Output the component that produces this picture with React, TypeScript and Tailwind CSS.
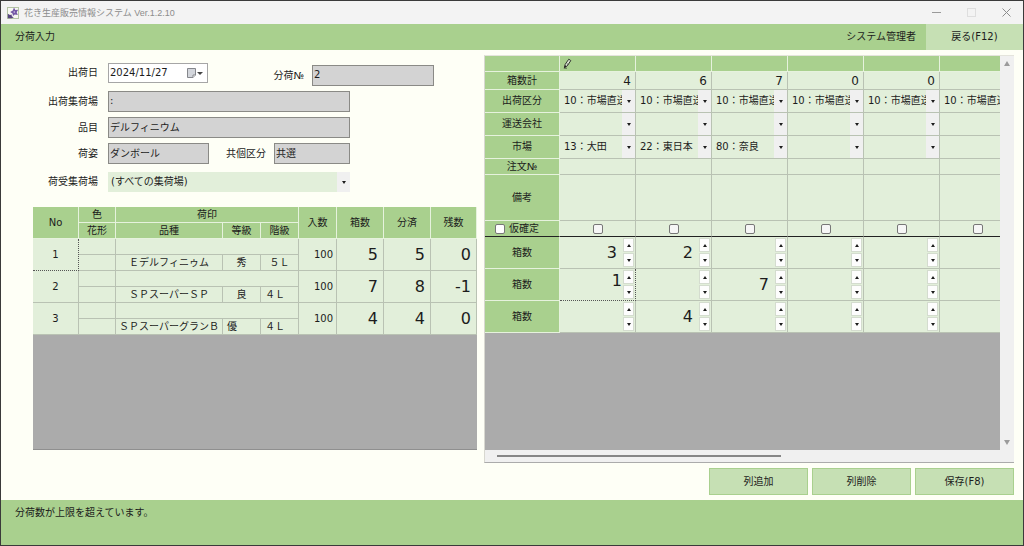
import React, { useState } from 'react'

interface Item {
  no: number
  name: string
  grade: string
  gradeAlign: string
  size: string
  sizeAlign: string
  per: number
  boxes: number
  done: number
  rest: number
}

interface Column {
  total: string
  market: string
  counts: string[]
}

const ITEMS: Item[] = [
  { no: 1, name: 'Ｅデルフィニゥム', grade: '秀', gradeAlign: 'text-center', size: '５Ｌ', sizeAlign: 'text-center', per: 100, boxes: 5, done: 5, rest: 0 },
  { no: 2, name: 'ＳＰスーパーＳＰ', grade: '良', gradeAlign: 'text-center', size: '４Ｌ', sizeAlign: 'text-left', per: 100, boxes: 7, done: 8, rest: -1 },
  { no: 3, name: 'ＳＰスーパーグランＢ', grade: '優', gradeAlign: 'text-left', size: '４Ｌ', sizeAlign: 'text-left', per: 100, boxes: 4, done: 4, rest: 0 },
]

const COLUMNS: Column[] = [
  { total: '4', market: '13：大田', counts: ['3', '1', ''] },
  { total: '6', market: '22：東日本', counts: ['2', '', '4'] },
  { total: '7', market: '80：奈良', counts: ['', '7', ''] },
  { total: '0', market: '', counts: ['', '', ''] },
  { total: '0', market: '', counts: ['', '', ''] },
  { total: '', market: '', counts: ['', '', ''] },
]

const HEAD = 'bg-[#a9d08e] border-r border-b border-[#e6f2dd] p-0 font-normal'
const CELL = 'bg-[#e2efda] border-r border-b border-[#b9c2b3] p-0'
const READONLY = 'h-[21px] border border-[#8a8a86] bg-[#d3d3d3] px-px pb-[3px] outline-none'
const ACTION = 'h-[27px] w-[99px] border border-[#a9d08e] bg-[#c6e0b4]'

function Triangle({ up = false, className = 'h-[3px] w-[4px]' }: { up?: boolean; className?: string }) {
  return (
    <svg viewBox="0 0 6 4" preserveAspectRatio="none" className={`fill-current ${className}`} aria-hidden="true">
      <path d={up ? 'M0 4L3 0L6 4Z' : 'M0 0L3 4L6 0Z'} />
    </svg>
  )
}

function AppIcon() {
  return (
    <svg viewBox="0 0 12 12" className="h-3 w-3" aria-hidden="true">
      <rect x="0.5" y="0.5" width="11" height="11" fill="#f7f8f2" stroke="#b4c4a4" />
      <path d="M7 0.6L8.3 2.9L11.2 2.8L9.7 5.2L10.8 7.9L7.8 7.5L6 9L5.5 6.5L3.2 4.9L5.8 3.6Z" fill="#7459a6" />
      <circle cx="7.3" cy="5" r="0.8" fill="#d9cdea" />
      <path d="M0.8 6.8L3 8L4.6 7.6L4.8 9.2L6.8 10.6L4.4 11.2H0.8Z" fill="#57457f" />
    </svg>
  )
}

function Spinner({ label, initial, active }: { label: string; initial: string; active: boolean }) {
  const [value, setValue] = useState(initial)
  const step = (n: number) => setValue(String(Math.max(0, Number(value) + n)))

  return (
    <div className="flex h-[31px] items-center">
      <input
        aria-label={label}
        value={value}
        onChange={e => setValue(e.target.value)}
        className={`h-full w-0 grow bg-transparent text-right text-[16px] outline-none ${active ? 'pr-px pb-[9px]' : 'pr-[6px] pb-px'}`}
      />
      <div className="mr-px flex flex-col gap-px">
        <button aria-label={`${label} 増`} onClick={() => step(1)} className="flex h-[14px] w-[11px] items-center justify-center border border-[#d4dccf] bg-[#fdfdfd]">
          <Triangle up />
        </button>
        <button aria-label={`${label} 減`} onClick={() => step(-1)} className="flex h-[14px] w-[11px] items-center justify-center border border-[#d4dccf] bg-[#fdfdfd]">
          <Triangle />
        </button>
      </div>
    </div>
  )
}

function Combo({ label, value }: { label: string; value: string }) {
  return (
    <div className="flex h-[22px] overflow-hidden">
      <select aria-label={label} defaultValue={value} className="h-full w-0 grow appearance-none bg-transparent pl-1 pb-px outline-none">
        <option>{value}</option>
      </select>
      <span className="flex w-[13px] items-center justify-center bg-[#f0f0f0]">
        <Triangle />
      </span>
    </div>
  )
}

function Field({ id, label, value }: { id: string; label: string; value: string }) {
  return (
    <div className="flex items-center gap-[10px]">
      <label htmlFor={id} className="w-[97px] text-right">{label}</label>
      <input id={id} readOnly defaultValue={value} className={`${READONLY} w-[242px]`} />
    </div>
  )
}

function ItemTable() {
  return (
    <table className="w-full table-fixed border-separate border-spacing-0 text-center">
      <colgroup>
        <col className="w-[46px]" />
        <col className="w-[37px]" />
        <col className="w-[107px]" />
        <col className="w-[38px]" />
        <col className="w-[38px]" />
        <col className="w-[38px]" />
        <col className="w-[47px]" />
        <col className="w-[47px]" />
        <col className="w-[46px]" />
      </colgroup>
      <thead>
        <tr>
          <th rowSpan={2} className={HEAD}>No</th>
          <th className={`${HEAD} h-4`}>色</th>
          <th colSpan={3} className={HEAD}>荷印</th>
          <th rowSpan={2} className={HEAD}>入数</th>
          <th rowSpan={2} className={HEAD}>箱数</th>
          <th rowSpan={2} className={HEAD}>分済</th>
          <th rowSpan={2} className={HEAD}>残数</th>
        </tr>
        <tr>
          <th className={`${HEAD} h-4`}>花形</th>
          <th className={HEAD}>品種</th>
          <th className={HEAD}>等級</th>
          <th className={HEAD}>階級</th>
        </tr>
      </thead>
      <tbody>
        {ITEMS.map(item => (
          <React.Fragment key={item.no}>
            <tr>
              <td rowSpan={2} className={item.no === 1 ? 'border-r border-b border-dotted border-[#555] bg-[#e2efda] p-0' : CELL}>{item.no}</td>
              <td className={`${CELL} h-4`} />
              <td colSpan={3} className={CELL} />
              <td rowSpan={2} className={`${CELL} pr-[3px] text-right`}>{item.per}</td>
              <td rowSpan={2} className={`${CELL} pr-[5px] text-right text-[16px]`}>{item.boxes}</td>
              <td rowSpan={2} className={`${CELL} pr-[5px] text-right text-[16px]`}>{item.done}</td>
              <td rowSpan={2} className={`${CELL} pr-[5px] text-right text-[16px]`}>{item.rest}</td>
            </tr>
            <tr>
              <td className={`${CELL} h-4`} />
              <td className={`${CELL} whitespace-nowrap`}>{item.name}</td>
              <td className={`${CELL} px-1 ${item.gradeAlign}`}>{item.grade}</td>
              <td className={`${CELL} px-1 ${item.sizeAlign}`}>{item.size}</td>
            </tr>
          </React.Fragment>
        ))}
      </tbody>
    </table>
  )
}

function AllocationTable() {
  return (
    <table className="w-[531px] table-fixed border-separate border-spacing-0">
      <colgroup>
        <col className="w-[75px]" />
        {COLUMNS.map((_, i) => <col key={i} className="w-[76px]" />)}
      </colgroup>
      <tbody>
        <tr>
          <th className={`${HEAD} h-4`} />
          {COLUMNS.map((_, i) => (
            <th key={i} className={`${HEAD} pl-[3px]`}>
              {i === 0 && (
                <svg viewBox="0 0 9 11" className="h-[11px] w-[9px]" fill="none" stroke="#222" aria-label="編集中">
                  <path d="M1.5 9.5L2.2 6.3L5.8 1.2L7.8 2.6L4.3 7.8Z" fill="#dce8d2" strokeWidth="0.9" />
                  <path d="M1.5 9.5L2.1 7.6L3.2 8.5Z" fill="#222" strokeWidth="0.6" />
                  <path d="M3.8 5.6L5.2 6.6M0.8 10.2H4" strokeWidth="0.6" />
                </svg>
              )}
            </th>
          ))}
        </tr>
        <tr>
          <th className={`${HEAD} h-[18px]`}>箱数計</th>
          {COLUMNS.map((c, i) => <td key={i} className={`${CELL} pr-1 text-right text-[12px]`}>{c.total}</td>)}
        </tr>
        <tr>
          <th className={`${HEAD} h-[23px]`}>出荷区分</th>
          {COLUMNS.map((_, i) => <td key={i} className={CELL}><Combo label="出荷区分" value="10：市場直送" /></td>)}
        </tr>
        <tr>
          <th className={`${HEAD} h-[23px]`}>運送会社</th>
          {COLUMNS.map((_, i) => <td key={i} className={CELL}><Combo label="運送会社" value="" /></td>)}
        </tr>
        <tr>
          <th className={`${HEAD} h-[23px]`}>市場</th>
          {COLUMNS.map((c, i) => <td key={i} className={CELL}><Combo label="市場" value={c.market} /></td>)}
        </tr>
        <tr>
          <th className={`${HEAD} h-4`}>注文№</th>
          {COLUMNS.map((_, i) => <td key={i} className={CELL} />)}
        </tr>
        <tr>
          <th className={`${HEAD} h-[46px]`}>備考</th>
          {COLUMNS.map((_, i) => <td key={i} className={CELL} />)}
        </tr>
        <tr>
          <th className="h-4 border-r border-b border-r-[#e6f2dd] border-b-[#222] bg-[#a9d08e] p-0 font-normal">
            <label className="flex items-center gap-1 pl-[10px]">
              <input type="checkbox" className="h-[10px] w-[10px] appearance-none rounded-[2px] border border-[#777] bg-white checked:bg-[#4a8a2a]" />
              仮確定
            </label>
          </th>
          {COLUMNS.map((_, i) => (
            <td key={i} className="border-r border-b border-r-[#b9c2b3] border-b-[#222] bg-[#e2efda] p-0">
              <input
                type="checkbox"
                aria-label={`仮確定 ${i + 1}`}
                className="mx-auto block h-[10px] w-[10px] appearance-none rounded-[2px] border border-[#777] bg-[#f6f6f6] checked:bg-[#4a8a2a]"
              />
            </td>
          ))}
        </tr>
        {ITEMS.map((item, r) => (
          <tr key={item.no}>
            <th className={`${HEAD} h-8`}>箱数</th>
            {COLUMNS.map((c, i) => {
              const active = r === 1 && i === 0
              return (
                <td key={i} className={active ? 'bg-[#e2efda] p-0 border-r border-b border-dotted border-[#555]' : CELL}>
                  <Spinner label={`箱数 ${item.no}-${i + 1}`} initial={c.counts[r]} active={active} />
                </td>
              )
            })}
          </tr>
        ))}
      </tbody>
    </table>
  )
}

export default function App() {
  return (
    <div className="flex min-h-screen flex-col border border-[#3a3a3a] bg-[#fefff6] font-['DejaVu_Sans','Noto_Sans_CJK_JP',sans-serif] text-[10px] leading-[14px] text-[#1c1c1c]">
      {/* Title bar */}
      <div className="flex h-[23px] items-center bg-[#f3f3f3] pl-[6px] pr-3 text-[#8c8c8c]">
        <AppIcon />
        <span className="ml-[5px] font-['Liberation_Sans','Noto_Sans_CJK_JP',sans-serif] text-[9px]">花き生産販売情報システム Ver.1.2.10</span>
        <div className="ml-auto flex items-center gap-[26px]">
          <button aria-label="最小化">
            <svg viewBox="0 0 9 9" className="h-[9px] w-[9px]" stroke="#9a9a9a"><path d="M0 4.5H9" /></svg>
          </button>
          <button aria-label="最大化">
            <svg viewBox="0 0 9 9" className="h-[9px] w-[9px]" fill="none" stroke="#dedede"><rect x="0.5" y="0.5" width="8" height="8" /></svg>
          </button>
          <button aria-label="閉じる">
            <svg viewBox="0 0 9 9" className="h-[9px] w-[9px]" stroke="#8c8c8c"><path d="M0.5 0.5L8.5 8.5M8.5 0.5L0.5 8.5" /></svg>
          </button>
        </div>
      </div>

      {/* Header */}
      <header className="flex h-[26px] items-center bg-[#a9d08e] pl-[14px]">
        <h1>分荷入力</h1>
        <span className="ml-auto mr-[10px]">システム管理者</span>
        <button className="h-full w-[97px] bg-[#c6e0b4]">戻る(F12)</button>
      </header>

      <main className="flex grow gap-[7px] pr-[9px]">
        <section className="flex w-[476px] shrink-0 flex-col pt-[13px] pb-[50px]">
          <form className="flex flex-col gap-[5px]">
            <div className="flex h-[23px]">
              <div className="flex h-5 items-center gap-[10px] self-start">
                <label htmlFor="date" className="w-[97px] text-right">出荷日</label>
                <div className="flex h-full w-[100px] items-center border border-[#a6a6a6] bg-white pr-1">
                  <input id="date" defaultValue="2024/11/27" className="w-0 grow bg-transparent pl-px outline-none" />
                  <button type="button" aria-label="カレンダー" className="flex items-center gap-px">
                    <svg viewBox="0 0 9 10" className="h-[10px] w-[9px]" aria-hidden="true">
                      <path d="M0.5 0.5H8.5V7L6 9.5H0.5Z" fill="#d3d6dc" stroke="#85878c" />
                      <path d="M6 9.5V7H8.5" fill="#fff" stroke="#85878c" />
                    </svg>
                    <Triangle className="h-[3px] w-[6px] text-[#444]" />
                  </button>
                </div>
              </div>
              <div className="ml-auto mr-[43px] flex items-center gap-2 self-end">
                <label htmlFor="number">分荷№</label>
                <input id="number" readOnly defaultValue="2" className={`${READONLY} w-[122px]`} />
              </div>
            </div>
            <Field id="place" label="出荷集荷場" value=":" />
            <Field id="kind" label="品目" value="デルフィニウム" />
            <div className="flex items-center">
              <label htmlFor="pack" className="mr-[10px] w-[97px] text-right">荷姿</label>
              <input id="pack" readOnly defaultValue="ダンボール" className={`${READONLY} w-[101px]`} />
              <label htmlFor="share" className="mr-2 w-[57px] text-right">共個区分</label>
              <input id="share" readOnly defaultValue="共選" className={`${READONLY} w-[76px]`} />
            </div>
            <div className="flex h-[23px] items-end gap-[10px]">
              <label htmlFor="receive" className="flex h-5 w-[97px] items-center justify-end">荷受集荷場</label>
              <div className="flex h-5 w-[242px] bg-[#e2efda]">
                <select id="receive" className="w-0 grow appearance-none bg-transparent pl-[3px] pb-px outline-none">
                  <option>(すべての集荷場)</option>
                </select>
                <span className="flex w-[13px] items-center justify-center bg-[#f0f0f0]"><Triangle /></span>
              </div>
            </div>
          </form>

          <div className="mt-[15px] ml-8 grow border-b border-[#8f8f8f] bg-[#ababab]">
            <ItemTable />
          </div>
        </section>

        <section className="flex min-w-0 grow flex-col gap-[5px] py-[5px]">
          <div className="flex grow flex-col border-t border-b border-l border-t-[#e4e4dc] border-b-[#ababab] border-l-[#d8d8d0] bg-[#f0f0f0]">
            <div className="flex grow">
              <div className="w-0 grow overflow-hidden bg-[#ababab]">
                <AllocationTable />
              </div>
              <div className="flex w-[14px] flex-col items-center justify-between py-[5px] text-[#9b9b9b]">
                <Triangle up className="h-[5px] w-[6px]" />
                <Triangle className="h-[5px] w-[6px]" />
              </div>
            </div>
            <div className="flex h-3 items-center pl-3">
              <div className="h-[2px] w-[284px] bg-[#868686]" />
            </div>
          </div>
          <div className="flex justify-end gap-1">
            <button className={ACTION}>列追加</button>
            <button className={ACTION}>列削除</button>
            <button className={ACTION}>保存(F8)</button>
          </div>
        </section>
      </main>

      <footer className="h-[45px] bg-[#a9d08e] pt-[6px] pl-[14px]">分荷数が上限を超えています。</footer>
    </div>
  )
}
